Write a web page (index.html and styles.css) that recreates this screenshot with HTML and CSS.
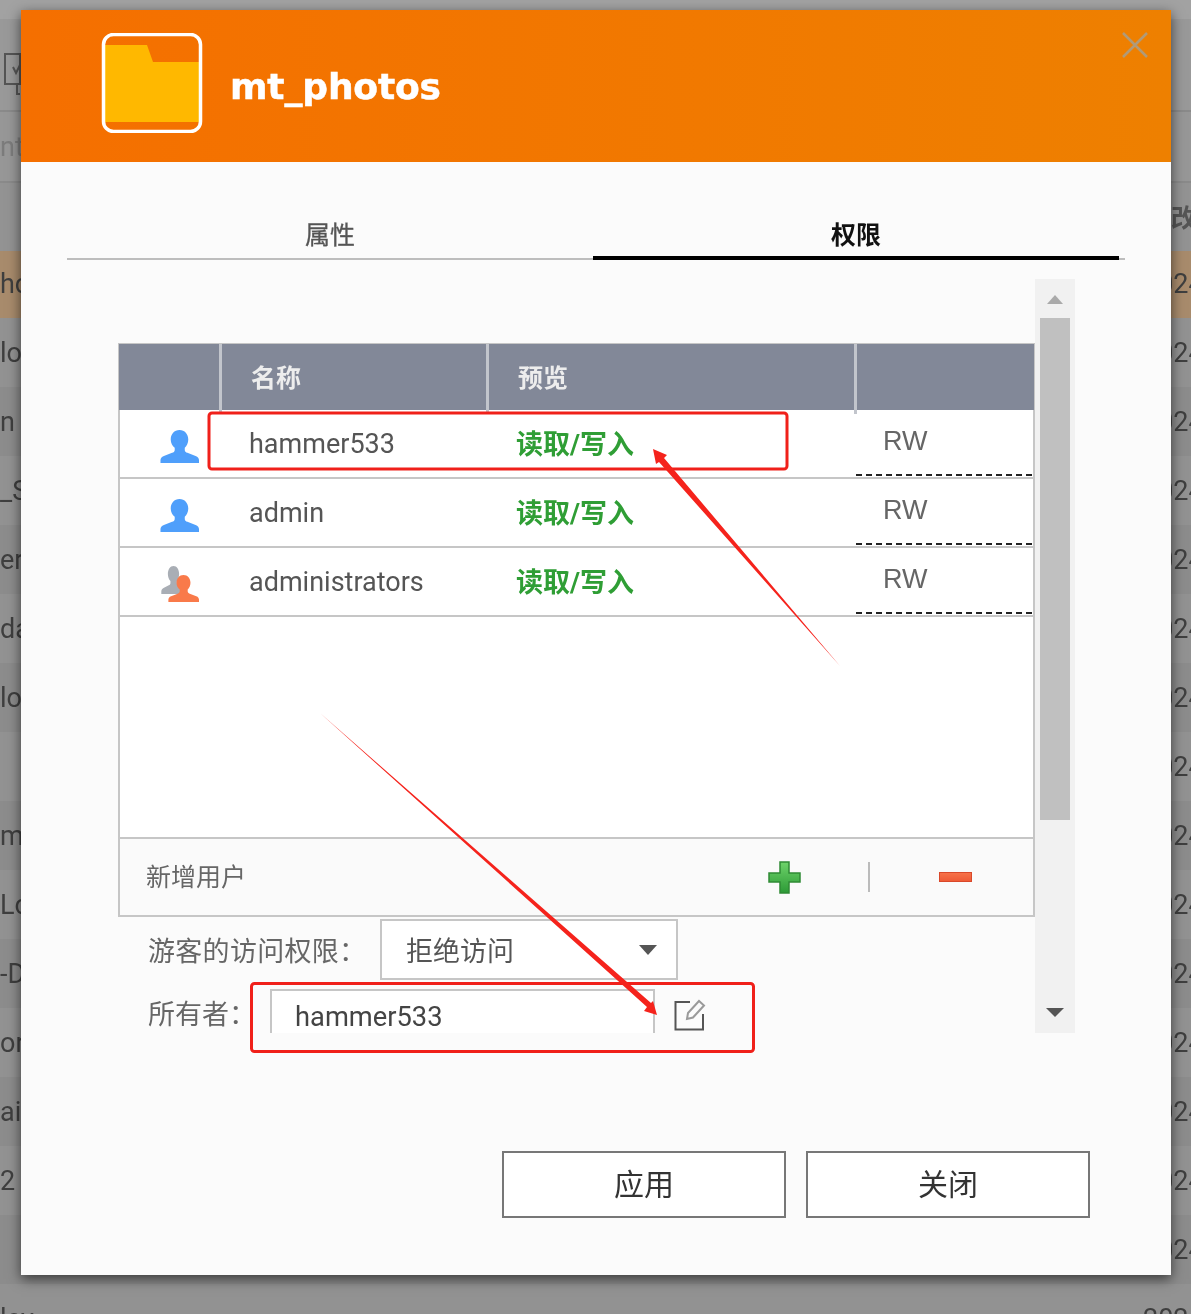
FILE: index.html
```html
<!DOCTYPE html>
<html lang="zh-CN">
<head>
  <meta charset="UTF-8">
  <title>mt_photos</title>
  <link rel="stylesheet" href="styles.css">
</head>
<body>
<div class="page">

  <svg width="0" height="0" class="defs">
    <defs>
      <symbol id="user-shape" viewBox="0 0 40 34" preserveAspectRatio="none">
        <path d="M20 0c5.400 0 9 4.300 9 9.800 0 3.600-1.600 6.600-3.600 8.500v2.200c0 1.500 1 2.400 2.700 3l8.400 3.200c2.400.9 3.500 2.400 3.500 4.400V34H.5v-2.900c0-2 1.100-3.500 3.500-4.400l8.400-3.200c1.700-.6 2.700-1.500 2.700-3v-2.200C12.600 16.400 11 13.400 11 9.800 11 4.300 14.600 0 20 0z"/>
      </symbol>
      <linearGradient id="plus-fill" x1="0" y1="0" x2="0" y2="1">
        <stop offset="0" stop-color="#6ed36a"/>
        <stop offset="1" stop-color="#2c9a36"/>
      </linearGradient>
      <linearGradient id="minus-fill" x1="0" y1="0" x2="0" y2="1">
        <stop offset="0" stop-color="#f7734a"/>
        <stop offset="1" stop-color="#ee5a36"/>
      </linearGradient>
    </defs>
  </svg>

  <!-- table behind the dialog -->
  <div class="backdrop">
    <div class="bar bar-tools">
      <svg class="check-icon" width="18" height="42" viewBox="0 0 18 42">
        <path d="M1 1H16V31H1ZM13 31V41H16" fill="none" stroke="#555" stroke-width="2"/>
        <path d="M9 14L12 20 16 12" fill="none" stroke="#555" stroke-width="2"/>
      </svg>
    </div>
    <div class="bar bar-head"><span class="left-text faint">nt</span></div>
    <div class="row row-title"><span class="left-text"></span><span class="right-text title-cell">改</span></div>
    <div class="row row-picked"><span class="left-text">ho</span><span class="right-text">2024</span></div>
    <div class="row"><span class="left-text">lo</span><span class="right-text">2024</span></div>
    <div class="row row-alt"><span class="left-text">n</span><span class="right-text">2024</span></div>
    <div class="row"><span class="left-text">_S</span><span class="right-text">2024</span></div>
    <div class="row row-alt"><span class="left-text">er</span><span class="right-text">2024</span></div>
    <div class="row"><span class="left-text">da</span><span class="right-text">2024</span></div>
    <div class="row row-alt"><span class="left-text">lo</span><span class="right-text">2024</span></div>
    <div class="row"><span class="left-text"></span><span class="right-text">2024</span></div>
    <div class="row row-alt"><span class="left-text">m</span><span class="right-text">2024</span></div>
    <div class="row"><span class="left-text">Lo</span><span class="right-text">2024</span></div>
    <div class="row row-alt"><span class="left-text">-D</span><span class="right-text">2024</span></div>
    <div class="row"><span class="left-text">or</span><span class="right-text">2024</span></div>
    <div class="row row-alt"><span class="left-text">ai</span><span class="right-text">2024</span></div>
    <div class="row"><span class="left-text">2</span><span class="right-text">2024</span></div>
    <div class="row row-alt"><span class="left-text"></span><span class="right-text">2024</span></div>
    <div class="row"><span class="left-text">lay</span><span class="right-text">2024</span></div>
  </div>

  <div class="dialog">
    <header class="dialog-head">
      <svg class="folder-icon" width="102" height="100" viewBox="0 0 102 100">
        <path d="M4 12H46L52 29H98V89H4Z" fill="#ffb800"/>
        <rect x="2.500" y="1.500" width="97" height="97" rx="10" fill="none" stroke="#fff" stroke-width="3.500"/>
      </svg>
      <h1>mt_photos</h1>
      <svg class="close-icon" width="26" height="26" viewBox="0 0 26 26">
        <path d="M1 1L25 25M25 1L1 25" stroke="#b09a78" stroke-width="2.500" fill="none"/>
      </svg>
    </header>

    <nav class="tabs">
      <div class="tab">属性</div>
      <div class="tab tab-active">权限</div>
    </nav>

    <div class="pane">
      <div class="pane-main">
        <div class="users">
          <div class="users-head">
            <div class="cell"></div>
            <div class="cell">名称</div>
            <div class="cell">预览</div>
            <div class="cell"></div>
          </div>

          <div class="user-row">
            <div class="user-icon"><svg class="ico-blue" width="39" height="33"><use href="#user-shape"/></svg></div>
            <div class="user-name">hammer533</div>
            <div class="user-perm">读取/写入</div>
            <div class="user-rw">RW</div>
          </div>
          <div class="user-row">
            <div class="user-icon"><svg class="ico-blue" width="39" height="33"><use href="#user-shape"/></svg></div>
            <div class="user-name">admin</div>
            <div class="user-perm">读取/写入</div>
            <div class="user-rw">RW</div>
          </div>
          <div class="user-row">
            <div class="user-icon">
              <svg class="ico-group" width="39" height="36" viewBox="0 0 39 36">
                <use href="#user-shape" x="1" y="0" width="25" height="28" fill="#a9aeb5"/>
                <use href="#user-shape" x="8" y="9" width="31" height="27" fill="#f97a4a"/>
              </svg>
            </div>
            <div class="user-name">administrators</div>
            <div class="user-perm">读取/写入</div>
            <div class="user-rw">RW</div>
          </div>

          <div class="users-empty"></div>

          <div class="users-foot">
            <span class="add-label">新增用户</span>
            <svg class="plus-icon" width="33" height="33" viewBox="0 0 33 33">
              <path d="M12 1h9v11h11v9H21v11h-9V21H1v-9h11z" fill="url(#plus-fill)" stroke="#2f8a35" stroke-width="1.500"/>
            </svg>
            <span class="foot-sep"></span>
            <svg class="minus-icon" width="33" height="10" viewBox="0 0 33 10">
              <rect x=".5" y=".5" width="32" height="9" fill="url(#minus-fill)" stroke="#d9482a"/>
            </svg>
          </div>
        </div>

        <div class="form-row form-guest">
          <label class="form-label guest-label">游客的访问权限：</label>
          <div class="select">
            <span>拒绝访问</span>
            <span class="select-arrow"></span>
          </div>
        </div>

        <div class="form-row form-owner">
          <label class="form-label owner-label">所有者：</label>
          <div class="owner-input">hammer533</div>
          <svg class="edit-icon" width="32" height="32" viewBox="0 0 32 32">
            <path d="M16 3H1.500V30.500H29V15" fill="none" stroke="#555" stroke-width="2"/>
            <path d="M13 20l1-6L25 2l5 4.500L19 18.500z" fill="none" stroke="#9a9a9a" stroke-width="2"/>
          </svg>
        </div>
      </div>

      <div class="scrollbar">
        <span class="arrow-up"></span>
        <div class="scroll-track"><div class="scroll-thumb"></div></div>
        <span class="arrow-down"></span>
      </div>
    </div>

    <footer class="dialog-foot">
      <button class="btn">应用</button>
      <button class="btn">关闭</button>
    </footer>
  </div>

  <!-- red marks somebody drew on the screenshot -->
  <svg class="marks" width="1191" height="1314" viewBox="0 0 1191 1314">
    <rect x="209" y="413" width="578" height="56" rx="3" fill="none" stroke="#f0201a" stroke-width="3"/>
    <rect x="251.500" y="983.500" width="502" height="68" rx="3" fill="none" stroke="#f0201a" stroke-width="3"/>
    <path d="M653 449L667 455 664 458 840 666 659 462 656 464Z" fill="#f5231c"/>
    <path d="M657 1015L644 1011 647 1007 320 713 651 1003 653 1001Z" fill="#f5231c"/>
  </svg>
</div>
</body>
</html>
```

FILE: styles.css
```css
:root {
  --line: #c6c6c6;
  --head-bg: #828898;
  --dlg-bg: #fbfbfb;
  --text: #555;
  --green: #2f9e35;
}

* {
  box-sizing: border-box;
}

html, body {
  margin: 0;
  padding: 0;
}

body {
  font-family: "Roboto", "Noto Sans CJK SC", sans-serif;
  color: var(--text);
  background-color: #949494;
}

.page {
  position: relative;
  width: 1191px;
  height: 1314px;
  overflow: hidden;
  filter: blur(0.6px);
}

.defs {
  position: absolute;
}

/* behind the dialog */
.backdrop {
  height: 1314px;
  overflow: hidden;
}

.bar {
  display: flex;
  align-items: center;
  border-bottom: 2px solid #8a8a8a;
}

.bar-tools {
  height: 112px;
  padding: 18px 0 0 4px;
  background-color: #999;
  border-top: 19px solid #a2a2a2;
}

.bar-head {
  height: 71px;
  background-color: #979797;
}

.row {
  display: flex;
  align-items: center;
  justify-content: space-between;
  height: 69px;
  font-size: 27px;
  color: #3f3f3f;
  background-color: #929292;
}

.row-alt {
  background-color: #8c8c8c;
}

.row-title {
  height: 66px;
  background-color: #939393;
}

.row-picked {
  padding-bottom: 2px;
  background-color: #a88b6c;
  border-top: 2px solid #939393;
}

.faint {
  color: #7c7c7c;
}

.left-text {
  font-size: 27px;
}

.right-text {
  width: 48px;
  white-space: nowrap;
}

.title-cell {
  width: 20px;
  font-size: 25px;
  font-weight: 700;
  color: #555;
}

/* dialog */
.dialog {
  position: absolute;
  left: 21px;
  top: 10px;
  width: 1150px;
  height: 1265px;
  display: flex;
  flex-direction: column;
  background-color: var(--dlg-bg);
  box-shadow: 0 4px 12px rgba(0,0,0,0.6);
}

.dialog-head {
  position: relative;
  display: flex;
  align-items: center;
  gap: 27px;
  height: 152px;
  padding-left: 80px;
  background: linear-gradient(to right, #f56f00, #ee8000);
}

.folder-icon {
  margin-bottom: 6px;
}

.dialog-head h1 {
  margin: 0;
  font-family: "DejaVu Sans", sans-serif;
  font-size: 36px;
  font-weight: 700;
  color: #fff;
  letter-spacing: -0.15px;
  -webkit-text-stroke: 0.5px #fff;
}

.close-icon {
  position: absolute;
  right: 23px;
  top: 22px;
}

.tabs {
  display: flex;
  height: 98px;
  margin: 0 46px;
  border-bottom: 2px solid #bdbdbd;
}

.tab {
  width: 526px;
  height: 98px;
  padding-top: 55px;
  text-align: center;
  font-size: 25px;
  line-height: 38px;
  color: #555;
  -webkit-text-stroke: 0.3px #555;
}

.tab-active {
  color: #111;
  border-bottom: 4px solid #000;
  font-weight: 700;
  -webkit-text-stroke: 0;
}

.pane {
  display: flex;
  height: 754px;
  margin: 19px 0 0 97px;
}

.pane-main {
  width: 917px;
  padding-top: 64px;
}

/* user table */
.users {
  display: flex;
  flex-direction: column;
  height: 574px;
  background-color: #fff;
  border: 2px solid var(--line);
}

.users-head {
  display: grid;
  grid-template-columns: 103px 267px 368px 1fr;
  height: 66px;
  margin: -1px -1px 0;
  background-color: var(--head-bg);
  color: #ededed;
  font-size: 25px;
  font-weight: 700;
  line-height: 70px;
  flex-shrink: 0;
}

.users-head .cell {
  padding-left: 29px;
  border-right: 3px solid #c2c5cc;
}

.users-head .cell:last-child {
  border-right: none;
}

.user-row {
  display: grid;
  grid-template-columns: 100px 268px 368px 1fr;
  height: 69px;
  align-items: center;
  border-bottom: 2px solid var(--line);
  flex-shrink: 0;
}

.user-icon {
  display: flex;
  justify-content: flex-end;
  margin-top: 5px;
  padding-right: 21px;
}

.ico-blue {
  fill: #4f9ffb;
}

.user-name {
  padding-left: 29px;
  font-size: 27px;
  color: #555;
}

.user-perm {
  padding: 0 0 3px 28px;
  font-size: 27px;
  font-weight: 700;
  color: var(--green);
}

.user-rw {
  align-self: stretch;
  padding: 16px 0 0 27px;
  margin: 0 1px 1px 0;
  font-family: "Liberation Sans", sans-serif;
  font-size: 27px;
  color: #666;
  border-bottom: 2px dashed #222;
}

.users-empty {
  flex: 1;
}

.users-foot {
  display: flex;
  align-items: center;
  height: 78px;
  padding-left: 26px;
  background-color: #fafafa;
  border-top: 2px solid var(--line);
  flex-shrink: 0;
}

.add-label {
  width: 622px;
  padding-bottom: 4px;
  font-size: 25px;
  color: #666;
}

.foot-sep {
  width: 2px;
  height: 30px;
  margin: 0 69px 0 67px;
  background-color: #bbb;
}

/* form under the table */
.form-row {
  display: flex;
  align-items: center;
}

.form-label {
  padding-left: 30px;
  font-size: 27px;
  color: #666;
}

.guest-label {
  width: 262px;
  letter-spacing: 0.3px;
  white-space: nowrap;
}

.owner-label {
  width: 152px;
  padding-top: 2px;
  white-space: nowrap;
}

.form-guest {
  margin-top: 2px;
  height: 61px;
}

.select {
  display: flex;
  align-items: center;
  justify-content: space-between;
  width: 298px;
  height: 61px;
  padding: 0 19px 0 24px;
  font-size: 27px;
  color: #555;
  background-color: #fff;
  border: 2px solid var(--line);
}

.select-arrow {
  border-left: 9px solid transparent;
  border-right: 9px solid transparent;
  border-top: 10px solid #555;
}

.form-owner {
  margin-top: 9px;
  height: 44px;
}

.owner-input {
  width: 385px;
  height: 44px;
  padding-left: 23px;
  font-size: 27.3px;
  line-height: 52px;
  color: #444;
  background-color: #fff;
  border: 2px solid var(--line);
  border-bottom: none;
}

.edit-icon {
  margin: 8px 0 0 19px;
}

/* scrollbar */
.scrollbar {
  display: flex;
  flex-direction: column;
  align-items: center;
  width: 40px;
  background-color: #f1f1f1;
}

.arrow-up {
  margin-top: 16px;
  border-left: 8px solid transparent;
  border-right: 8px solid transparent;
  border-bottom: 9px solid #aaa;
}

.scroll-track {
  flex: 1;
  width: 30px;
  margin-top: 14px;
}

.scroll-thumb {
  height: 502px;
  background-color: #c0c0c0;
}

.arrow-down {
  margin-bottom: 16px;
  border-left: 9px solid transparent;
  border-right: 9px solid transparent;
  border-top: 9px solid #555;
}

/* bottom buttons */
.dialog-foot {
  display: flex;
  justify-content: flex-end;
  gap: 20px;
  margin-top: 118px;
  padding-right: 81px;
}

.btn {
  width: 284px;
  height: 67px;
  padding: 0 0 6px;
  font-family: "Noto Sans CJK SC", sans-serif;
  font-size: 30px;
  color: #333;
  background-color: #fff;
  border: 2px solid #777;
  border-radius: 0;
}

/* drawn annotations */
.marks {
  position: absolute;
  left: 0;
  top: 0;
  pointer-events: none;
}
```
